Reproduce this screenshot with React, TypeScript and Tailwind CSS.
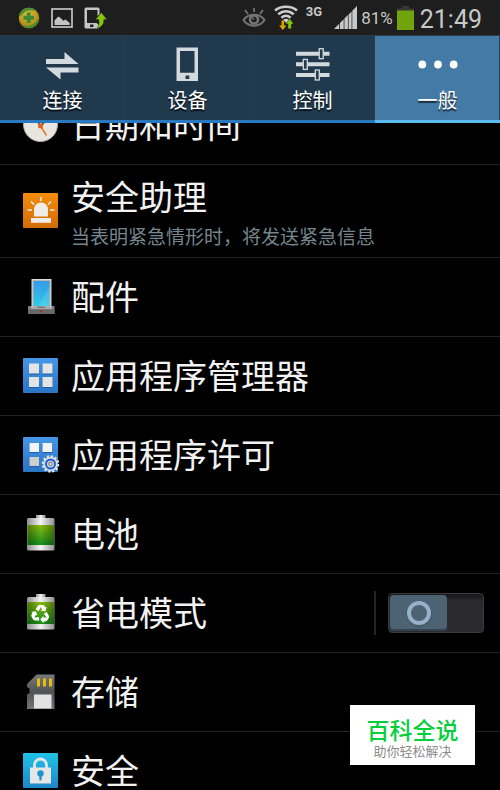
import React, { useState } from 'react';

type TabId = 'connections' | 'device' | 'controls' | 'general';

interface Tab {
    id: TabId;
    label: string;
    icon: React.ReactNode;
}

interface SettingItem {
    label: string;
    summary?: string;
    icon: React.ReactNode;
    hasSwitch?: boolean;
}

/* Status bar icons */

const SecurityBallIcon = () => (
    <svg width="22" height="22" viewBox="0 0 22 22" aria-hidden="true">
        <defs>
            <radialGradient id="ball" cx="0.45" cy="0.35" r="0.65">
                <stop offset="0" stopColor="#d3c63c" />
                <stop offset="0.6" stopColor="#c79a1d" />
                <stop offset="1" stopColor="#8c7a18" />
            </radialGradient>
        </defs>
        <circle cx="11" cy="11" r="10.3" fill="url(#ball)" />
        <path d="M1 9C2 3 7 0.5 12 0.8c3 0.3 5 1.6 6.500 3.200C14 2.500 8 3 5 6.500 3.500 8 3 9.500 1 9z" fill="#4f8d35" />
        <path d="M21 12c-1 6-6 9.500-11 9.200-3-0.300-5-1.400-6.500-3.200C9 20 14 18.500 17 15.500c1.500-1.500 2-3 4-3.500z" fill="#4f8d35" />
        <path d="M8.700 5.500h4v3.300h3.300v4h-3.300v3.300h-4v-3.300H5.500v-4h3.200z" fill="#3c8a33" />
    </svg>
);

const PictureIcon = () => (
    <svg width="22" height="20" viewBox="0 0 22 20" aria-hidden="true">
        <rect x="1" y="1" width="20" height="18" fill="none" stroke="#c4c4c4" strokeWidth="1.700" />
        <path d="M3.500 17v-4.500l3.800-4 2 1.200 3 3 2.200-1.200 4.200 3.500v2z" fill="#c4c4c4" />
    </svg>
);

const PhoneTransferIcon = () => (
    <svg width="24" height="22" viewBox="0 0 24 22" aria-hidden="true">
        <path d="M2 0.500h12a1.500 1.500 0 0 1 1.500 1.500v5l-2 2V3H3v13h9.500l3 2.500v1a2 2 0 0 1-1.500 2H2A1.500 1.500 0 0 1 0.500 20V2A1.500 1.500 0 0 1 2 0.500z" fill="#c6c6c6" />
        <rect x="6" y="17.500" width="3.500" height="2.500" rx="0.500" fill="#1e1e1e" />
        <path d="M17.300 5.500l5.700 7h-3.200c0.300 4-1.700 7.500-6.800 8.800 2-2.500 2.300-5 1.800-8.800h-3.300z" fill="#83c60a" stroke="#1e1e1e" strokeWidth="0.400" />
    </svg>
);

const EyeIcon = () => (
    <svg width="24" height="21" viewBox="0 0 24 21" fill="none" stroke="#747474" aria-hidden="true">
        <path d="M1.500 13C6 6 18 6 22.500 13 18 20.500 6 20.500 1.500 13z" strokeWidth="2" />
        <circle cx="12" cy="12.500" r="4" strokeWidth="2.600" />
        <path d="M12 12.500l-2-2" strokeWidth="1.500" />
        <path d="M12 1v4M3 3l3 4M21 3l-3 4" strokeWidth="1.800" />
    </svg>
);

const WifiIcon = () => (
    <svg width="24" height="26" viewBox="0 0 24 26" aria-hidden="true">
        <g fill="none" stroke="#cdcdcd" strokeWidth="2.600">
            <path d="M1 5.500C7 0.500 17 0.500 23 5.500" />
            <path d="M4.200 9.300C9 5.300 15 5.300 19.800 9.300" />
            <path d="M7.400 12.800C10.300 10.200 13.700 10.200 16.600 12.800" />
        </g>
        <path d="M9.200 14.800c1.600-1.400 4-1.400 5.600 0L12 18z" fill="#cdcdcd" />
        <path d="M7.500 15.500h2.500v5h2.500l-3.700 4.500-3.700-4.500h2.400z" fill="#d9a800" />
        <path d="M14.200 23.500v-4.800h-2.200l3.700-4.700 3.700 4.700h-2.200v4.800z" fill="#83c60a" />
    </svg>
);

const SignalIcon = () => (
    <svg width="23" height="23" viewBox="0 0 23 23" fill="#c8c8c8" aria-hidden="true">
        <path d="M0 23l5.200-5.200V23zM6 17l3.700-3.700V23H6zM10.400 12.600l3.500-3.500V23h-3.500zM14.600 8.400l3-3V23h-3zM18.300 4.700L23 0v23h-4.700z" />
    </svg>
);

const StatusBatteryIcon = () => (
    <svg width="17" height="24" viewBox="0 0 17 24" aria-hidden="true">
        <rect x="5" y="0" width="7" height="4" fill="#383838" />
        <rect x="0" y="2.500" width="17" height="3" fill="#383838" />
        <rect x="0" y="4.500" width="17" height="19.500" fill="#71a30b" />
    </svg>
);

/* Tab icons */

const ArrowsIcon = () => (
    <svg width="34" height="34" viewBox="0 0 34 34" fill="#d3dade" aria-hidden="true">
        <path d="M0 12H18.500V5L32.500 17H0z" />
        <path d="M32.500 20.500v5H14.500v7L0 20.500z" />
    </svg>
);

const PhoneIcon = () => (
    <svg width="34" height="34" viewBox="0 0 34 34" aria-hidden="true">
        <path fillRule="evenodd" d="M5.500 0.500h21.500v33.500H5.500zM9 4v21.800h14.500V4zM14.500 28.500v3.500h3.800v-3.500z" fill="#d3dade" />
    </svg>
);

const SlidersIcon = () => (
    <svg width="34" height="34" viewBox="0 0 34 34" aria-hidden="true">
        <path d="M0 4.800h33.500v4H0zM0 15.300h33.500v4H0zM0 26h33.500v4H0z" fill="#d3dade" />
        <g fill="#243c4e" stroke="#d3dade" strokeWidth="1.300">
            <rect x="23.200" y="1.700" width="4" height="10" />
            <rect x="7.300" y="12.400" width="4" height="10" />
            <rect x="19.300" y="23" width="4" height="10" />
        </g>
    </svg>
);

const DotsIcon = () => (
    <svg width="40" height="34" viewBox="0 0 40 34" fill="#ffffff" aria-hidden="true">
        <circle cx="4.300" cy="17.500" r="3.900" />
        <circle cx="20" cy="17.500" r="3.900" />
        <circle cx="35.700" cy="17.500" r="3.900" />
    </svg>
);

/* List icons */

const ClockIcon = () => (
    <svg width="35" height="35" viewBox="0 0 35 35" aria-hidden="true">
        <circle cx="17.500" cy="17.500" r="17" fill="#e9e6e1" stroke="#b5b1ab" />
        <path d="M17.500 19l6 9.500" stroke="#e2762d" strokeWidth="1.500" />
        <path d="M17.500 19l-5-8M17.500 19l9-9" stroke="#7a5238" strokeWidth="2" />
        <circle cx="17.500" cy="19" r="2.500" fill="#e0661c" />
    </svg>
);

const SirenIcon = () => (
    <svg width="35" height="35" viewBox="0 0 35 35" aria-hidden="true">
        <defs>
            <linearGradient id="siren" x1="0" y1="0" x2="0" y2="1">
                <stop offset="0" stopColor="#f58c0b" />
                <stop offset="1" stopColor="#d26c06" />
            </linearGradient>
        </defs>
        <rect width="35" height="35" rx="1" fill="url(#siren)" />
        <path d="M11 23.500v-7a7 7 0 0 1 14 0v7z" fill="#f0ece8" />
        <rect x="8" y="25" width="20" height="4.800" fill="#f0ece8" />
        <path d="M18 4v4M8 8.500l3 3M28 8.500l-3 3M4.500 17h4.500M27 17h4.500" stroke="#f0ece8" strokeWidth="1.700" />
    </svg>
);

const DockIcon = () => (
    <svg width="35" height="35" viewBox="0 0 35 35" aria-hidden="true">
        <defs>
            <linearGradient id="dock" x1="0" y1="0" x2="0" y2="1">
                <stop offset="0" stopColor="#359bea" />
                <stop offset="1" stopColor="#2fc9e8" />
            </linearGradient>
        </defs>
        <rect x="5" y="27" width="26.500" height="8" fill="#7d7d80" />
        <rect x="9" y="0.500" width="19" height="29" fill="#b9b6b4" stroke="#dcd8d5" />
        <rect x="10.500" y="2" width="16" height="25" fill="url(#dock)" />
        <path d="M26.500 8v19H15z" fill="#ffffff" fillOpacity="0.120" />
        <path d="M9 27.500h18.500v2.500H9z" fill="#a9a9ab" />
        <rect x="14" y="27.500" width="8" height="1.500" rx="0.700" fill="#77777a" />
        <rect x="5" y="30.500" width="26.500" height="4.500" fill="#68686b" />
        <rect x="17" y="31.500" width="2.500" height="2" fill="#b3262b" />
    </svg>
);

const AppsIcon = () => (
    <svg width="35" height="35" viewBox="0 0 35 35" aria-hidden="true">
        <defs>
            <linearGradient id="apps" x1="0" y1="0" x2="0" y2="1">
                <stop offset="0" stopColor="#4597e6" />
                <stop offset="1" stopColor="#2a74c4" />
            </linearGradient>
        </defs>
        <rect width="35" height="35" rx="1" fill="url(#apps)" />
        <path d="M6 6.500h10v10H6zM19.500 6.500h10v10h-10zM6 20h10v10H6zM19.500 20h10v10h-10z" fill="#1f5ea4" />
        <path d="M6 5.500h10v10H6zM19.500 5.500h10v10h-10zM6 19h10v10H6zM19.500 19h10v10h-10z" fill="#e4e4e4" />
    </svg>
);

const AppPermissionIcon = () => (
    <svg width="35" height="35" viewBox="0 0 35 35" className="overflow-visible" aria-hidden="true">
        <rect width="35" height="35" rx="1" fill="url(#apps)" />
        <path d="M6.500 7h9.500v9H6.500zM19.500 7h9.500v9h-9.500zM6.500 21h9.500v9H6.500z" fill="#1f5ea4" />
        <path d="M6.500 6h9.500v9H6.500zM19.500 6h9.500v9h-9.500z" fill="#f3f3f3" />
        <path d="M6.500 20h9.500v9H6.500z" fill="#cfcfcf" />
        <circle cx="27.500" cy="27" r="7.800" fill="none" stroke="#e2e2e2" strokeWidth="2" strokeDasharray="2.400 1.680" />
        <circle cx="27.500" cy="27" r="7.200" fill="#e2e2e2" />
        <circle cx="27.500" cy="27" r="4.500" fill="#d8d8d8" stroke="#1d5fd6" strokeWidth="2" />
        <circle cx="27.500" cy="27" r="2.400" fill="#8f8f8f" />
        <circle cx="27.500" cy="27" r="1.200" fill="#d5d5d5" />
    </svg>
);

const BatteryBody = () => (
    <>
        <defs>
            <linearGradient id="steel" x1="0" y1="0" x2="1" y2="0">
                <stop offset="0" stopColor="#8f8f8f" />
                <stop offset="0.500" stopColor="#f4f4f4" />
                <stop offset="1" stopColor="#8f8f8f" />
            </linearGradient>
            <linearGradient id="charge" x1="0" y1="0" x2="0" y2="1">
                <stop offset="0" stopColor="#8abd10" />
                <stop offset="1" stopColor="#16901a" />
            </linearGradient>
            <linearGradient id="shade" x1="0" y1="0" x2="1" y2="0">
                <stop offset="0" stopColor="#000000" stopOpacity="0.350" />
                <stop offset="0.500" stopColor="#000000" stopOpacity="0" />
                <stop offset="1" stopColor="#000000" stopOpacity="0.350" />
            </linearGradient>
        </defs>
        <rect x="13" y="0" width="9.500" height="4" fill="url(#steel)" />
        <rect x="4" y="3" width="27.500" height="32.500" rx="1.500" fill="url(#steel)" />
        <rect x="4.500" y="10" width="26.500" height="20" fill="url(#charge)" />
        <rect x="4.500" y="10" width="26.500" height="20" fill="url(#shade)" />
    </>
);

const BatteryIcon = () => (
    <svg width="35" height="36" viewBox="0 0 35 36" aria-hidden="true">
        <BatteryBody />
    </svg>
);

const PowerSavingIcon = () => (
    <svg width="35" height="36" viewBox="0 0 35 36" aria-hidden="true">
        <BatteryBody />
        <rect x="4.500" y="8" width="26.500" height="22" fill="url(#charge)" />
        <rect x="4.500" y="8" width="26.500" height="22" fill="url(#shade)" />
        {/* one folded arrow, turned three times round the centre */}
        <g fill="#ffffff">
            {[0, 120, 240].map((angle) => (
                <g key={angle} transform={`rotate(${angle} 17.500 20)`}>
                    <path d="M12.600 15.600l2-3.400c0.500-0.900 1.100-1.300 2-1.300h3c0.900 0 1.500 0.400 2 1.200l0.900 1.500 1.400-0.800-1.600 4.600-4.700-0.800 1.500-0.900-1.600-2.700-1.800 4.300z" />
                </g>
            ))}
        </g>
    </svg>
);

const SdCardIcon = () => (
    <svg width="35" height="35" viewBox="0 0 35 35" aria-hidden="true">
        <defs>
            <linearGradient id="sd" x1="0" y1="0" x2="0" y2="1">
                <stop offset="0" stopColor="#78797b" />
                <stop offset="0.500" stopColor="#515254" />
                <stop offset="1" stopColor="#747577" />
            </linearGradient>
        </defs>
        <path d="M13.500 0.500h18v34.500H4V20.500l2.500-1.500v-4.500L4 13v-3z" fill="url(#sd)" />
        <path d="M14 4.500h3v8h-3zM20 4.500h3v8h-3zM26 4.500h3v8h-3z" fill="#e7bd12" />
        <rect x="11" y="20.500" width="17.500" height="14" fill="#e2e2e2" />
    </svg>
);

const LockIcon = () => (
    <svg width="35" height="35" viewBox="0 0 35 35" aria-hidden="true">
        <defs>
            <linearGradient id="lock" x1="0" y1="0" x2="0" y2="1">
                <stop offset="0" stopColor="#1fc4e6" />
                <stop offset="1" stopColor="#1c86c8" />
            </linearGradient>
        </defs>
        <rect width="35" height="35" rx="1" fill="url(#lock)" />
        <path d="M11.500 15v-3a6 6 0 0 1 12 0v3" fill="none" stroke="#e6e6e6" strokeWidth="2.800" />
        <rect x="7" y="14.500" width="21" height="16" fill="#e6e6e6" />
        <circle cx="17.500" cy="20.500" r="3.200" fill="#1f93cd" />
        <rect x="16.300" y="21" width="2.400" height="6.500" rx="1" fill="#1f93cd" />
    </svg>
);

const TABS: Tab[] = [
    { id: 'connections', label: '连接', icon: <ArrowsIcon /> },
    { id: 'device', label: '设备', icon: <PhoneIcon /> },
    { id: 'controls', label: '控制', icon: <SlidersIcon /> },
    { id: 'general', label: '一般', icon: <DotsIcon /> },
];

const ITEMS: SettingItem[] = [
    { label: '日期和时间', icon: <ClockIcon /> },
    { label: '安全助理', summary: '当表明紧急情形时，将发送紧急信息', icon: <SirenIcon /> },
    { label: '配件', icon: <DockIcon /> },
    { label: '应用程序管理器', icon: <AppsIcon /> },
    { label: '应用程序许可', icon: <AppPermissionIcon /> },
    { label: '电池', icon: <BatteryIcon /> },
    { label: '省电模式', icon: <PowerSavingIcon />, hasSwitch: true },
    { label: '存储', icon: <SdCardIcon /> },
    { label: '安全', icon: <LockIcon /> },
];

const StatusBar = () => (
    <div className="flex h-[35px] shrink-0 items-center justify-between bg-[#1e1e1e] px-[18px]">
        <div className="flex items-center gap-[11px]">
            <SecurityBallIcon />
            <PictureIcon />
            <PhoneTransferIcon />
        </div>
        <div className="flex items-center font-[Roboto,sans-serif] text-[#c8c8c8]">
            <EyeIcon />
            <span className="ml-2">
                <WifiIcon />
            </span>
            <span className="ml-2 self-start pt-0.5 text-[13px] font-bold leading-4">3G</span>
            <span className="ml-3">
                <SignalIcon />
            </span>
            <span className="ml-1 text-[17px] leading-6">81%</span>
            <span className="ml-1">
                <StatusBatteryIcon />
            </span>
            <span className="ml-1.5 pt-1 text-[25px] leading-7">21:49</span>
        </div>
    </div>
);

const Row = ({ item }: { item: SettingItem }) => {
    const [enabled, setEnabled] = useState(false);

    return (
        <li
            className={`flex items-center border-b border-[#222222] pl-[23px] pr-4 ${item.summary ? 'h-[93px]' : 'h-[79px]'}`}
        >
            <button type="button" className="flex flex-1 items-center gap-[13px] pb-0.5 text-left">
                <span className="w-[35px] shrink-0">{item.icon}</span>
                <span className={`flex flex-col ${item.summary ? 'pt-2' : ''}`}>
                    <span className="text-[34px] leading-[44px] text-[#f2f2f2]">{item.label}</span>
                    {item.summary && (
                        <span className="text-[19px] leading-9 text-[#75868e]">{item.summary}</span>
                    )}
                </span>
            </button>
            {item.hasSwitch && (
                <label className="flex h-11 cursor-pointer items-center border-l-2 border-[#242424] pl-3">
                    <input
                        type="checkbox"
                        role="switch"
                        aria-label={item.label}
                        checked={enabled}
                        onChange={() => setEnabled(!enabled)}
                        className="sr-only"
                    />
                    <span
                        className={`flex h-10 w-24 rounded border border-[#3a3a3c] bg-linear-to-b from-[#17171a] via-[#2a2a2f] via-20% to-[#2a2a2f] p-px ${enabled ? 'justify-end' : 'justify-start'}`}
                    >
                        <span className="flex h-full w-[57px] items-center justify-center rounded-sm bg-[#4d6272] shadow-[inset_0_-2px_0_#33434f]">
                            <span className="size-6 rounded-full border-4 border-[#97b1cb] shadow" />
                        </span>
                    </span>
                </label>
            )}
        </li>
    );
};

export default function App() {
    const [active, setActive] = useState<TabId>('general');

    return (
        <div className="relative flex h-screen flex-col overflow-hidden bg-black font-['Noto_Sans_CJK_SC',sans-serif]">
            <StatusBar />

            <nav className="grid shrink-0 grid-cols-4">
                {TABS.map((tab) => (
                    <button
                        key={tab.id}
                        type="button"
                        aria-pressed={active === tab.id}
                        onClick={() => setActive(tab.id)}
                        className={`flex h-[88px] flex-col items-center border-b-[3px] pt-3 text-white shadow-[inset_-1px_1px_0_#2b3e4c] ${
                            active === tab.id ? 'border-[#5cbcf2] bg-[#447aa6]' : 'border-[#2879bf] bg-[#21394d]'
                        }`}
                    >
                        {tab.icon}
                        <span className="mt-1 text-[20px] leading-[30px] text-shadow-[0_2px_1px_#000000b0]">{tab.label}</span>
                    </button>
                ))}
            </nav>

            <main className="min-h-0 flex-1 overflow-hidden">
                {/* list is scrolled part of a row under the tabs */}
                <ul className="-mt-[37px]">
                    {ITEMS.map((item) => (
                        <Row key={item.label} item={item} />
                    ))}
                </ul>
            </main>

            <div className="absolute bottom-[25px] right-[25px] flex h-[60px] w-[125px] flex-col items-center justify-center bg-white pt-2">
                <span className="text-[23px] font-medium leading-6 text-[#06cf3b]">百科全说</span>
                <span className="text-[13px] leading-5 text-[#8c8c8c]">助你轻松解决</span>
            </div>
        </div>
    );
}
